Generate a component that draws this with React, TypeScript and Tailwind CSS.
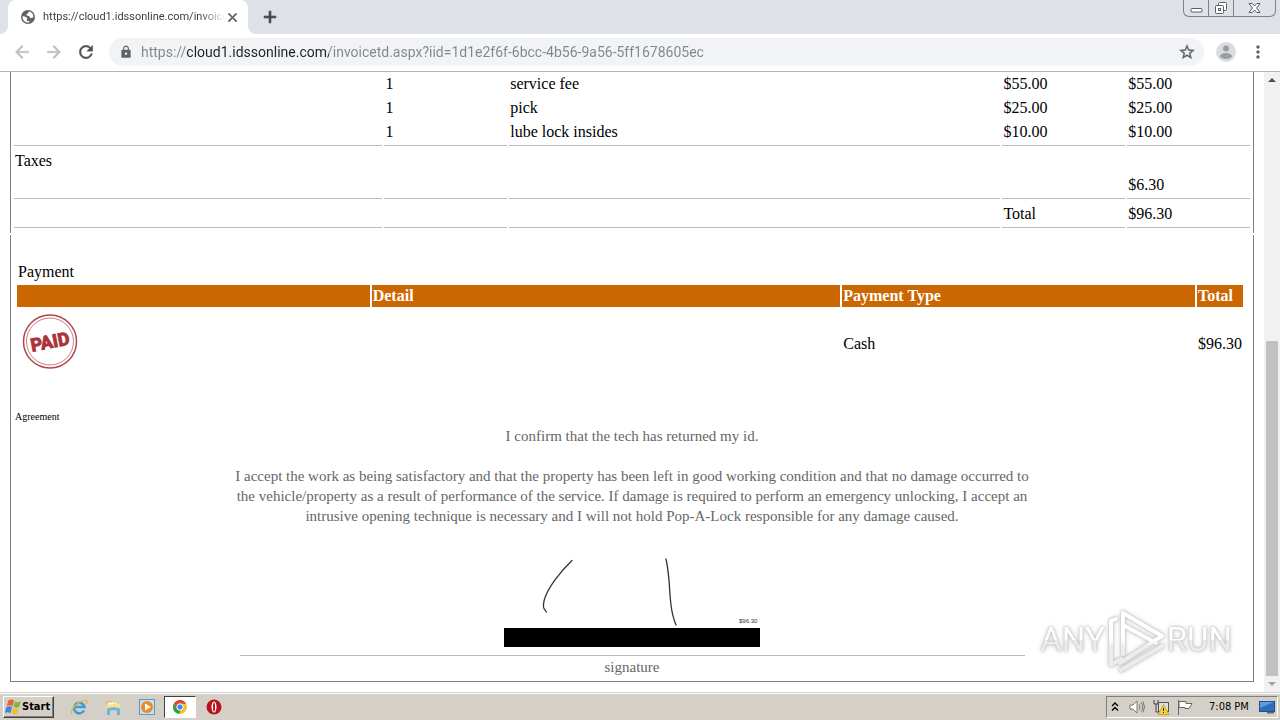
import React from "react";
import {
  MdAdd,
  MdArrowBack,
  MdArrowForward,
  MdClose,
  MdLock,
  MdMoreVert,
  MdRefresh,
  MdStarBorder,
} from "react-icons/md";

interface LineItem {
  qty: number;
  description: string;
  price: string;
  total: string;
}

const items: LineItem[] = [
  { qty: 1, description: "service fee", price: "$55.00", total: "$55.00" },
  { qty: 1, description: "pick", price: "$25.00", total: "$25.00" },
  { qty: 1, description: "lube lock insides", price: "$10.00", total: "$10.00" },
];

const WindowButtons = () => (
  <div className="flex h-[17px] self-start rounded-b-md border border-t-0 border-[#7c8088] mr-1">
    <button aria-label="Minimize" className="flex w-[25px] items-center justify-center border-r border-[#7c8088]">
      <svg width="13" height="16" viewBox="0 0 13 16" fill="#fff" stroke="#5a5e66">
        <rect x="1" y="8.500" width="11" height="3.500" rx="1" />
      </svg>
    </button>
    <button aria-label="Restore" className="flex w-[25px] items-center justify-center border-r border-[#7c8088]">
      <svg width="14" height="16" viewBox="0 0 14 16" fill="#fff" stroke="#5a5e66">
        <rect x="4.500" y="2.500" width="8" height="8" rx="1" />
        <rect x="1.500" y="5.500" width="8" height="8" rx="1" />
        <rect x="4.500" y="8.500" width="2" height="2" />
      </svg>
    </button>
    <button aria-label="Close" className="flex w-[41px] items-center justify-center">
      <svg width="13" height="16" viewBox="0 0 13 16" fill="#fff" stroke="#5a5e66">
        <path d="M1 3.500h3.200L6.500 6l2.300-2.500H12L8.600 8l3.400 4.500H8.800L6.500 10l-2.300 2.500H1L4.400 8z" />
      </svg>
    </button>
  </div>
);

const TabStrip = () => (
  <div className="flex h-[34px] shrink-0 bg-[#dee1e6]">
    <svg width="8" height="34" viewBox="0 0 8 34" fill="#fff">
      <path d="M8 26v8H0a8 8 0 0 0 8-8z" />
    </svg>
    <div className="flex w-[240px] items-center rounded-t-lg bg-white pl-3 pr-2">
      <svg width="16" height="16" viewBox="0 0 16 16" className="shrink-0">
        <circle cx="8" cy="8" r="7" fill="#5f6368" />
        <path d="M9 2.600c-1.200.500-.300 1.600-1.500 2.200-1 .400-1.400.600-1 1.500.400.700 2.200.300 2.800 1 .500.700.100 1.600 1.200 1.800 1 .200 1.400-.700 2.900-.600A5.600 5.600 0 0 0 9 2.600z" fill="#fff" />
        <path d="M2.500 7.300c1.500-.200 3.500.400 4.500 1.500.800.900-.500 1.300-.300 2.400.100.800 1 .800 2 .900.900.100.800.900.300 1.400A5.600 5.600 0 0 1 2.500 7.300z" fill="#fff" />
      </svg>
      <span className="ml-[7px] flex-1 overflow-hidden whitespace-nowrap font-['Roboto',sans-serif] text-[11px] text-[#3c4043] [mask-image:linear-gradient(90deg,#000_86%,transparent)]">
        https://cloud1.idssonline.com/invoice
      </span>
      <button aria-label="Close tab" className="text-[#5f6368]">
        <MdClose size={15} className="[&>path:last-of-type]:stroke-1" />
      </button>
    </div>
    <svg width="8" height="34" viewBox="0 0 8 34" fill="#fff">
      <path d="M0 26v8h8a8 8 0 0 1-8-8z" />
    </svg>
    <button aria-label="New tab" className="ml-1 text-[#3c4043]">
      <MdAdd size={20} className="[&>path:last-of-type]:stroke-1" />
    </button>
    <div className="flex-1" />
    <WindowButtons />
  </div>
);

const Toolbar = () => (
  <div className="flex h-[38px] shrink-0 items-center border-b border-[#b6b4b6] bg-white pb-px pl-3">
    <button aria-label="Back" className="w-8 text-[#bcbec1]">
      <MdArrowBack size={20} className="[&>path:last-of-type]:stroke-[0.5px]" />
    </button>
    <button aria-label="Forward" className="w-8 text-[#bcbec1]">
      <MdArrowForward size={20} className="[&>path:last-of-type]:stroke-[0.5px]" />
    </button>
    <button aria-label="Reload" className="w-8 text-[#4d5156]">
      <MdRefresh size={20} className="[&>path:last-of-type]:stroke-[0.5px]" />
    </button>
    <div className="ml-px flex h-7 flex-1 items-center rounded-full bg-[#f1f3f4] pl-2.5 pr-2">
      <MdLock size={14} className="shrink-0 text-[#5f6368]" />
      <input
        aria-label="Address"
        readOnly
        defaultValue="https://cloud1.idssonline.com/invoicetd.aspx?iid=1d1e2f6f-6bcc-4b56-9a56-5ff1678605ec"
        className="ml-2 flex-1 bg-[linear-gradient(90deg,#80868b_45px,#202124_45px,#202124_188px,#80868b_188px)] bg-clip-text font-['Roboto',sans-serif] text-[14px] text-transparent outline-none"
      />
      <button aria-label="Bookmark this page" className="text-[#5f6368]">
        <MdStarBorder size={18} className="[&>path:last-of-type]:stroke-[0.5px]" />
      </button>
    </div>
    <button aria-label="Profile" className="ml-3">
      <svg width="20" height="20" viewBox="0 0 20 20">
        <circle cx="10" cy="10" r="10" fill="#dadce0" />
        <circle cx="10" cy="6.500" r="3" fill="#9a9da1" />
        <ellipse cx="10" cy="14" rx="6" ry="3" fill="#9a9da1" />
      </svg>
    </button>
    <button aria-label="Menu" className="ml-3 mr-3 text-[#5f6368]">
      <MdMoreVert size={20} />
    </button>
  </div>
);

const ItemsTable = () => (
  <table className="-mt-px w-full table-fixed border-separate border-spacing-0.5">
    <colgroup>
      <col className="w-[30%]" />
      <col className="w-[10%]" />
      <col className="w-[40%]" />
      <col className="w-[10%]" />
      <col className="w-[10%]" />
    </colgroup>
    <tbody>
      {items.map((item) => (
        <tr key={item.description}>
          <td className="p-px" />
          <td className="p-px">{item.qty}</td>
          <td className="p-px">{item.description}</td>
          <td className="p-px">{item.price}</td>
          <td className="p-px">{item.total}</td>
        </tr>
      ))}
      <tr className="*:border-t *:border-[#b9b9b9] *:px-px *:pb-px *:pt-[5px]">
        <td>Taxes</td>
        <td />
        <td />
        <td />
        <td />
      </tr>
      <tr>
        <td colSpan={4} />
        <td className="p-px">$6.30</td>
      </tr>
      <tr className="*:border-t *:border-[#b9b9b9] *:px-px *:pb-px *:pt-[5px]">
        <td />
        <td />
        <td />
        <td>Total</td>
        <td>$96.30</td>
      </tr>
      <tr className="*:h-1 *:border-t *:border-[#b9b9b9]">
        <td />
        <td />
        <td />
        <td />
        <td />
      </tr>
    </tbody>
  </table>
);

const PaidStamp = () => (
  <svg width="56" height="56" viewBox="0 0 56 56" role="img" aria-label="Paid stamp">
    <g fill="none" stroke="#b0474c">
      <circle cx="28" cy="27.500" r="26.500" strokeWidth="1.500" />
      <circle cx="28" cy="27.500" r="23.500" strokeWidth="0.700" />
    </g>
    <text
      x="28"
      y="34"
      textAnchor="middle"
      transform="rotate(-11 28 28)"
      fill="#ab3339"
      stroke="#ab3339"
      strokeWidth="1"
      className="font-['Roboto',sans-serif] text-[18px] font-bold"
    >
      PAID
    </text>
  </svg>
);

const PaymentTable = () => (
  <table className="ml-1 w-[calc(100%-12px)] border-separate border-spacing-0.5">
    <caption className="pb-px pl-[3px] text-left">Payment</caption>
    <thead>
      <tr className="text-left text-white *:bg-[#cc6600] *:p-px">
        <th className="w-[30%]" />
        <th className="w-[40%]">Detail</th>
        <th className="w-[30%]">Payment Type</th>
        <th>Total</th>
      </tr>
    </thead>
    <tbody>
      <tr className="h-[70px] *:p-px">
        <td className="align-top">
          <div className="pl-1 pt-1">
            <PaidStamp />
          </div>
        </td>
        <td />
        <td>Cash</td>
        <td>$96.30</td>
      </tr>
    </tbody>
  </table>
);

const Signature = () => (
  <svg width="256" height="96" viewBox="0 0 256 96" className="mx-auto mt-[25px] block" role="img" aria-label="Customer signature">
    <g fill="none" stroke="#333" strokeWidth="1.300" strokeLinecap="round">
      <path d="M68 9.500C57 20 43 37 40 50c-1.500 7 0 8 2.500 11" />
      <path d="M162 8c4 18 3 31 5 46 1 8 2.500 14 5 20" />
    </g>
    <text x="235" y="72" fill="#333" className="font-['Liberation_Sans',sans-serif] text-[6px]">
      $96.30
    </text>
    <rect y="77" width="256" height="19" />
  </svg>
);

const Agreement = () => (
  <div className="pb-1 pt-[31px]">
    <h2 className="pl-1 text-[10px] leading-[10px]">Agreement</h2>
    <div className="mt-1 text-center text-[15px] text-[#666]">
      <p>I confirm that the tech has returned my id.</p>
      <p className="mx-auto mt-5 max-w-[810px]">
        I accept the work as being satisfactory and that the property has been left in good working condition and that no damage occurred to
        the vehicle/property as a result of performance of the service. If damage is required to perform an emergency unlocking, I accept an
        intrusive opening technique is necessary and I will not hold Pop-A-Lock responsible for any damage caused.
      </p>
      <Signature />
      <hr className="mx-auto mb-px mt-2 w-[785px] max-w-full border-[#b9b9b9]" />
      <p>signature</p>
    </div>
  </div>
);

const Scrollbar = () => (
  <div className="flex w-4 shrink-0 flex-col bg-[#f1f1f1]">
    <button aria-label="Scroll up" className="flex h-4 items-center justify-center">
      <svg width="8" height="4" viewBox="0 0 8 4" fill="#505050">
        <path d="M4 0l4 4H0z" />
      </svg>
    </button>
    <div className="flex flex-1 flex-col justify-end px-0.5">
      <div className="h-[57%] bg-[#c1c1c1]" />
    </div>
    <button aria-label="Scroll down" className="flex h-4 items-center justify-center">
      <svg width="8" height="4" viewBox="0 0 8 4" fill="#a3a3a3">
        <path d="M4 4l4-4H0z" />
      </svg>
    </button>
  </div>
);

const Watermark = () => (
  <div className="absolute bottom-5 right-12 flex items-center font-['Roboto',sans-serif] text-[33px] leading-[64px] [filter:drop-shadow(0_0_1px_#bbb)_drop-shadow(0_0_2px_#ccc)]">
    <span className="bg-[linear-gradient(#fff_50%,#ececec_50%)] bg-clip-text text-transparent">ANY</span>
    <svg width="62" height="64" viewBox="1 0 62 64" fill="none" stroke="url(#fade)" strokeWidth="4" strokeLinejoin="round" strokeLinecap="round">
      <defs>
        <linearGradient id="fade" gradientUnits="userSpaceOnUse" x1="0" y1="0" x2="0" y2="64">
          <stop offset="0.500" stopColor="#fff" />
          <stop offset="0.600" stopColor="#ececec" />
        </linearGradient>
      </defs>
      <path d="M19 46V5l39 23-42 27M19 17l33 18" />
      <path d="M12 11L7 13v44l10-6" />
      <path d="M17 62l41-24" />
    </svg>
    <span className="bg-[linear-gradient(#fff_50%,#ececec_50%)] bg-clip-text text-transparent">RUN</span>
  </div>
);

const StartButton = () => (
  <button className="flex h-[22px] items-center border border-b-[#404040] border-l-white border-r-[#404040] border-t-white bg-[#d4d0c8] pr-[3px] text-[11px] font-bold shadow-[inset_-1px_-1px_#808080]">
    <svg width="18" height="18" viewBox="0 0 16 16">
      <path d="M4 2c2-1 3-1 5 .300L7.500 7.500C5.500 6.200 4.500 6.300 2.500 7z" fill="#e8642c" />
      <path d="M9.800 2.800c2 1 3.500 1 5.200 0L13.500 8c-1.700 1-3 .800-5 0z" fill="#7db93c" />
      <path d="M2.200 8c2-.900 3-.800 5 .300L5.700 13.500c-2-1.200-3-1.200-5-.300z" fill="#3f86d4" />
      <path d="M8.200 8.800c2 1 3.300 1 5 .200L11.700 14c-1.700 1-3 .800-5 0z" fill="#f3bd2b" />
    </svg>
    Start
  </button>
);

const QuickLaunch = () => (
  <div className="ml-2 flex items-center">
    <button aria-label="Internet Explorer" className="flex h-[22px] w-[34px] items-center justify-center">
      <svg width="18" height="18" viewBox="0 0 18 18" fill="none">
        <path d="M14 12.500a5.300 5.300 0 1 1 .500-3.500H5" stroke="#3c9ddb" strokeWidth="2.600" />
        <path d="M2 16c-2-2 1-7 5-10s9-5 10-3c.400 1 0 2-.500 3" stroke="#eab73d" strokeWidth="1.300" />
      </svg>
    </button>
    <button aria-label="Windows Explorer" className="flex h-[22px] w-[34px] items-center justify-center">
      <svg width="17" height="17" viewBox="0 0 17 17">
        <path d="M1.500 2h5l1 1.500H14V9H1.500z" fill="#e3bd52" />
        <path d="M3 3.500h9v4H3z" fill="#fffbe0" />
        <path d="M1.500 5.500h6l1-1h6.500v7H1.500z" fill="#f7e08e" />
        <path d="M2 9.500q6.500-2.500 13 0V16h-3v-4.500H5V16H2z" fill="#6fb4df" />
      </svg>
    </button>
    <button aria-label="Media Player" className="flex h-[22px] w-[34px] items-center justify-center">
      <svg width="16" height="16" viewBox="0 0 16 16">
        <rect x="0.500" y="0.500" width="15" height="15" fill="#c4e0f4" stroke="#5a9bcf" />
        <circle cx="8" cy="8" r="6" fill="#ee8920" />
        <path d="M6 4.500v7L12 8z" fill="#fff" />
      </svg>
    </button>
    <button
      aria-label="Google Chrome"
      className="flex h-[22px] w-8 items-center justify-center border border-b-white border-l-[#404040] border-r-white border-t-[#404040] bg-white"
    >
      <svg width="14" height="14" viewBox="0 0 14 14">
        <circle cx="7" cy="7" r="7" fill="#f6c32c" />
        <path d="M1 3.500A7 7 0 0 1 13.100 3.700H7L4 8.700z" fill="#db4437" />
        <path d="M1 3.400L4.200 8.800 7.500 10 6.200 14A7 7 0 0 1 1 3.400z" fill="#2ea052" />
        <circle cx="7" cy="7" r="3.200" fill="#4285f4" stroke="#fff" />
      </svg>
    </button>
    <button aria-label="Opera" className="flex h-[22px] w-9 items-center justify-center">
      <svg width="16" height="16" viewBox="0 0 16 16">
        <circle cx="8" cy="8" r="7.500" fill="#b9141b" />
        <ellipse cx="8" cy="8" rx="2.500" ry="5.500" fill="#fff" />
        <ellipse cx="8" cy="8" rx="1" ry="4.500" fill="#b9141b" />
      </svg>
    </button>
  </div>
);

const Tray = () => (
  <div className="ml-auto mr-0.5 flex h-[22px] w-[172px] items-center border border-b-white border-l-[#808080] border-r-white border-t-[#808080] pl-1">
    <svg width="8" height="10" viewBox="0 0 8 10" fill="none" stroke="#000" strokeWidth="1.400">
      <path d="M1 4l3-3 3 3M1 8.500l3-3 3 3" />
    </svg>
    <svg className="ml-2.5" width="16" height="16" viewBox="0 0 16 16" fill="none" stroke="#777">
      <path d="M1 6h3l4-4v12l-4-4H1z" fill="#fff" />
      <path d="M10 5.500q2 2.500 0 5M12 3.500q3.500 4.500 0 9M14 2.500q3 5.500 0 11" />
    </svg>
    <svg className="ml-2" width="16" height="16" viewBox="0 0 16 16">
      <path d="M1 1v4h4V1M3 5v8h3" fill="none" stroke="#444" />
      <rect x="5.500" y="3.500" width="10" height="9" fill="#dedede" stroke="#555" />
      <path d="M10.500 5.500L16 15.500H5z" fill="#f8d12c" stroke="#a98b10" strokeWidth="0.600" />
      <path d="M10.500 9v3M10.500 13v1" stroke="#222" />
    </svg>
    <svg className="ml-2" width="16" height="16" viewBox="0 0 16 16" fill="#fff" stroke="#666">
      <path d="M1.500 1v15" />
      <path d="M2 2.500h7v2h6l-3 5H8v-1H2z" />
    </svg>
    <span className="ml-4 whitespace-nowrap text-[11px]">7:08 PM</span>
    <svg className="ml-auto mr-0.5" width="16" height="14" viewBox="0 0 16 14">
      <rect x="0.500" y="1.500" width="15" height="10" fill="#2c6fc0" stroke="#244f88" />
      <path d="M1 2h14L1 8z" fill="#5e9ce0" />
      <path d="M8 12h7v1.500H8z" fill="#666" />
    </svg>
  </div>
);

const Taskbar = () => (
  <div className="flex h-7 shrink-0 items-center border-t border-[#d4d0c8] bg-[#d4d0c8] pl-[3px] pt-px text-black shadow-[inset_0_1px_#fff]">
    <StartButton />
    <QuickLaunch />
    <Tray />
  </div>
);

const App = () => (
  <div className="flex h-screen flex-col overflow-hidden bg-white font-['DejaVu_Sans_Condensed','DejaVu_Sans',sans-serif]">
    <TabStrip />
    <Toolbar />
    <div className="relative flex min-h-0 flex-1">
      <main className="min-w-0 flex-1 overflow-hidden px-2.5 font-['Liberation_Serif',serif] text-[16px] leading-5 text-black">
        <section className="border-x border-[#808080] px-px">
          <ItemsTable />
        </section>
        <section className="mt-0.5 border-x border-b border-[#808080] pt-[27px]">
          <PaymentTable />
          <Agreement />
        </section>
      </main>
      <Scrollbar />
      <Watermark />
    </div>
    <Taskbar />
  </div>
);

export default App;
